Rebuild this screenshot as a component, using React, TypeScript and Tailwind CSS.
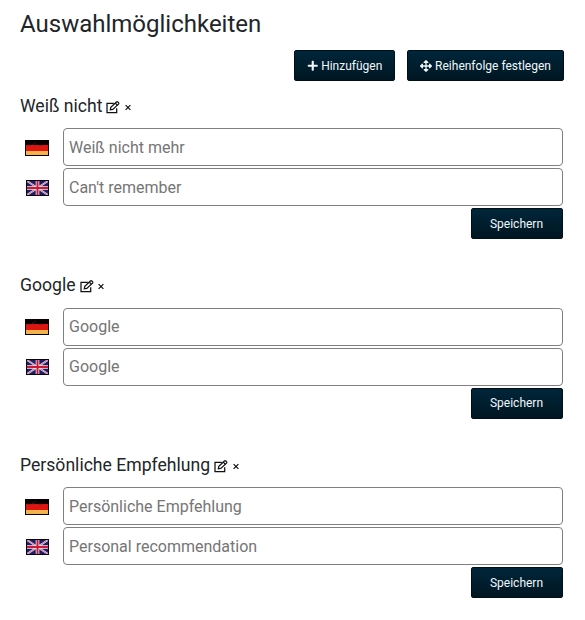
import React from 'react';
import { FaPlus, FaArrowsAlt } from 'react-icons/fa';

const options = [
  { title: 'Weiß nicht', de: 'Weiß nicht mehr', en: "Can't remember" },
  { title: 'Google', de: 'Google', en: 'Google' },
  { title: 'Persönliche Empfehlung', de: 'Persönliche Empfehlung', en: 'Personal recommendation' },
];

const buttonClass =
  'flex h-[31px] items-center justify-center rounded-[2px] border border-[#000f18] bg-gradient-to-b from-[#00263a] to-[#001622] text-xs text-[#f0f8fc]';

const EditIcon: React.FC = () => (
  <svg width="14" height="13" viewBox="0 0 14 13" fill="none" stroke="#111" strokeWidth="1.25">
    <path d="M7.8 2.3H1v9.2h9.7V7.2" />
    <path d="M4.3 8.8l.5-2.4L10.4 1q.7-.6 1.4 0l.7.7q.6.7 0 1.4L6.8 8.4z" />
    <path d="M9.3 2.1l2.1 2.1" />
  </svg>
);

const GermanFlag: React.FC = () => (
  <svg width="24" height="16" viewBox="0 0 24 16">
    <path d="M0 0h24v16H0z" fill="#080000" />
    <path d="M1 5h22v6H1z" fill="#de1510" />
    <path d="M1 11h22v4H1z" fill="#f3b34c" />
    <path d="M2 5.2h4M8 5h2M13 5.2h5M7 4.5l2-1M10 3l1-1" stroke="#4b3030" strokeWidth=".7" />
  </svg>
);

const BritishFlag: React.FC = () => (
  <svg width="23" height="16" viewBox="0 0 23 16">
    <path d="M0 0h23v16H0z" fill="#1d1c66" />
    <path d="M1 1l21 14M22 1L1 15" stroke="#e6dfea" strokeWidth="2" />
    <path d="M1 1l21 14M22 1L1 15" stroke="#d04a62" strokeWidth=".7" />
    <path d="M11.5 1v14M1 8h21" stroke="#f4e9ef" strokeWidth="3.6" />
    <path d="M11.5 1v14M1 8h21" stroke="#cc1936" strokeWidth="2" />
    <path d="M.5 .5h22v15H.5z" fill="none" stroke="#070512" />
  </svg>
);

const Field: React.FC<{ flag: React.ReactNode; placeholder: string }> = ({ flag, placeholder }) => (
  <div className="flex h-[38px] items-center">
    <div className="flex w-[43px] justify-end pt-[1.4px] pr-[14px]">{flag}</div>
    <input
      className="h-[38px] w-[500px] rounded-[4px] border border-[#808080] bg-white px-[5px] text-base placeholder:text-[#757575] placeholder:opacity-100"
      placeholder={placeholder}
    />
  </div>
);

export default function App() {
  return (
    <div className="h-[620px] overflow-hidden bg-white pt-[10px] pl-5 font-['Roboto',sans-serif] text-[#212529]">
      <h1 className="h-10 text-2xl leading-[29px]">Auswahlmöglichkeiten</h1>

      <div className="flex justify-end gap-3 pr-[21px]">
        <button className={`${buttonClass} w-[101px] gap-[3px]`}>
          <FaPlus size={11.5} />
          Hinzufügen
        </button>
        <button className={`${buttonClass} w-[157px] gap-[3px]`}>
          <FaArrowsAlt size={12} />
          Reihenfolge festlegen
        </button>
      </div>

      <div className="pt-[12.8px]">
        {options.map((option) => (
          <section key={option.title} className="h-[179.6px]">
            <div className="flex h-[34.3px] items-start">
              <h2 className="text-[17.6px] leading-6">{option.title}</h2>
              <button className="ml-1 pt-[7px]" aria-label="Bearbeiten">
                <EditIcon />
              </button>
              <button className="ml-[4.5px] pt-[10px]" aria-label="Löschen">
                <svg width="6" height="7" viewBox="0 0 6 7" stroke="#111" strokeWidth="1.2">
                  <path d="M.6 1.1l4.8 4.8M5.4 1.1L.6 5.9" />
                </svg>
              </button>
            </div>
            <div className="flex w-[543px] flex-col gap-[2px]">
              <Field flag={<GermanFlag />} placeholder={option.de} />
              <Field flag={<BritishFlag />} placeholder={option.en} />
              <button className={`${buttonClass} w-[92px] self-end pr-px`}>Speichern</button>
            </div>
          </section>
        ))}
      </div>
    </div>
  );
}
